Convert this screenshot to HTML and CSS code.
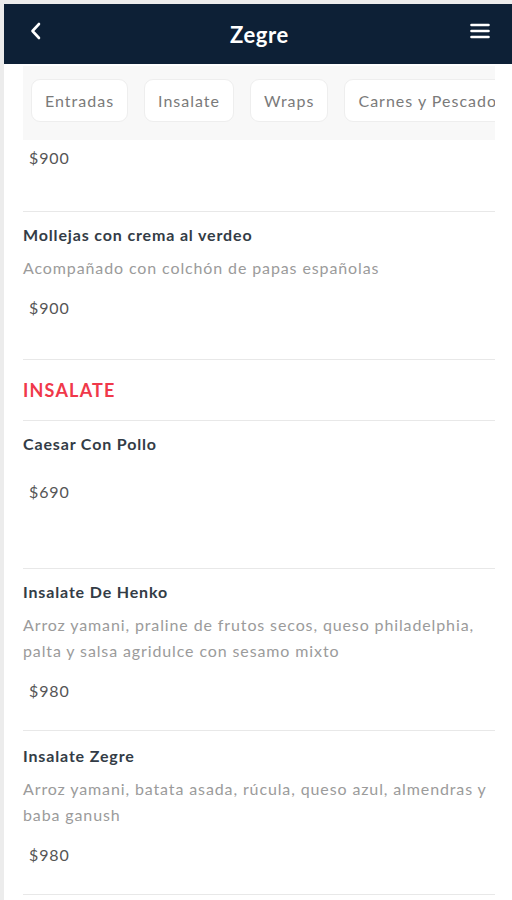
FILE: index.html
```html
<!DOCTYPE html>
<html lang="es">
<head>
<meta charset="utf-8">
<title>Zegre</title>
<link rel="stylesheet" href="styles.css">
</head>
<body>
<div class="page">
  <header class="topbar">
    <span class="icon-btn back">
      <svg width="14" height="18" viewBox="0 0 14 18"><path d="M10 2 L3.5 9 L10 16" fill="none" stroke="#fff" stroke-width="2.6" stroke-linecap="round" stroke-linejoin="round"/></svg>
    </span>
    <h1 class="title">Zegre</h1>
    <span class="icon-btn menu">
      <svg width="20" height="18" viewBox="0 0 20 18"><path d="M1.5 3h17M1.5 9h17M1.5 15h17" stroke="#fff" stroke-width="2.6" stroke-linecap="round"/></svg>
    </span>
  </header>
  <main class="content">
    <nav class="tabs">
      <span class="pill">Entradas</span>
      <span class="pill">Insalate</span>
      <span class="pill">Wraps</span>
      <span class="pill">Carnes y Pescados</span>
    </nav>
    <div class="partial">
      <div class="price">$900</div>
    </div>
    <div class="item">
      <div class="name">Mollejas con crema al verdeo</div>
      <div class="desc">Acompañado con colchón de papas españolas</div>
      <div class="price">$900</div>
    </div>
    <div class="category">INSALATE</div>
    <div class="item">
      <div class="name">Caesar Con Pollo</div>
      <div class="desc empty"></div>
      <div class="price">$690</div>
    </div>
    <div class="item">
      <div class="name">Insalate De Henko</div>
      <div class="desc">Arroz yamani, praline de frutos secos, queso philadelphia, palta y salsa agridulce con sesamo mixto</div>
      <div class="price">$980</div>
    </div>
    <div class="item last">
      <div class="name">Insalate Zegre</div>
      <div class="desc">Arroz yamani, batata asada, rúcula, queso azul, almendras y baba ganush</div>
      <div class="price">$980</div>
    </div>
  </main>
</div>
</body>
</html>
```
FILE: styles.css
```css
* { box-sizing: border-box; }
html, body { margin: 0; padding: 0; }
body {
  font-family: Lato, "Open Sans", sans-serif;
  background: #fff;
  overflow: hidden;
}
.page {
  border-top: 4px solid #ececec;
  border-left: 4px solid #ececec;
  min-height: 900px;
  background: #fff;
}
.topbar {
  height: 60px;
  background: #0d2036;
  display: grid;
  grid-template-columns: 1fr auto 1fr;
  align-items: center;
  padding: 0 22px 0 25px;
}
.icon-btn { display: flex; align-items: center; margin-top: -6px; }
.icon-btn.menu { justify-self: end; }
.title {
  margin: 0;
  color: #fff;
  font-size: 22px;
  font-weight: 700;
  letter-spacing: 0.6px;
}
.content {
  padding: 0 17px 0 19px;
}
.tabs {
  margin-top: 2px;
  height: 74px;
  background: #f8f8f8;
  display: flex;
  gap: 16px;
  padding: 13px 0 0 8px;
  overflow: hidden;
  white-space: nowrap;
}
.pill {
  flex: none;
  height: 43px;
  display: flex;
  align-items: center;
  padding: 0 13px;
  background: #fff;
  border: 1px solid #eeeeee;
  border-radius: 9px;
  color: #7a7a7a;
  font-size: 16px;
  letter-spacing: 1px;
}
.partial {
  height: 71px;
  padding-top: 8px;
}
.price {
  color: #555;
  font-size: 16px;
  line-height: 20px;
  padding-left: 6px;
  letter-spacing: 0.9px;
}
.item {
  border-top: 1px solid #e8e8e8;
  min-height: 148px;
  padding: 13px 0 29px;
}
.item.last { border-bottom: 1px solid #e8e8e8; padding-top: 15px; }
.name {
  color: #333c46;
  font-size: 16px;
  font-weight: 700;
  line-height: 20px;
  letter-spacing: 0.85px;
}
.desc {
  color: #9b9b9b;
  font-size: 16px;
  line-height: 26px;
  margin: 10px 0 17px;
  letter-spacing: 0.88px;
}
.desc.empty { height: 2px; margin: 0 0 26px; }
.category {
  border-top: 1px solid #e8e8e8;
  height: 61px;
  display: flex;
  align-items: center;
  color: #f0384a;
  font-size: 18px;
  font-weight: 700;
  letter-spacing: 1.2px;
  padding-bottom: 1px;
}
```
